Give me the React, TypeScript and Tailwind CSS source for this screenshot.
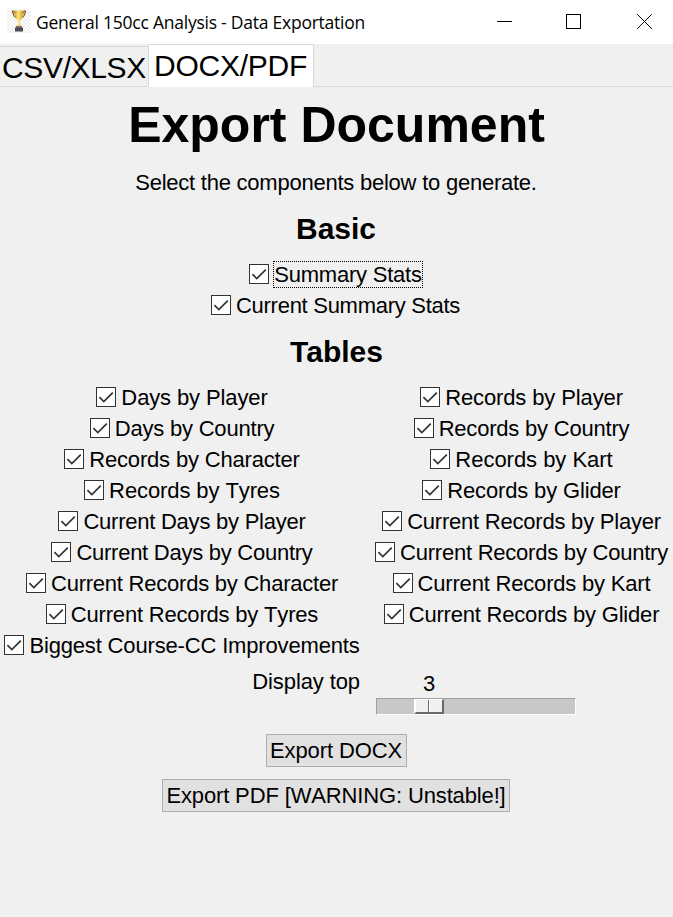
import React from "react";

type Item = { text: string; tracking?: number; focused?: boolean };

const basic: Item[] = [
  { text: "Summary Stats", tracking: -0.22, focused: true },
  { text: "Current Summary Stats", tracking: -0.28 },
];

const left: Item[] = [
  { text: "Days by Player", tracking: -0.12 },
  { text: "Days by Country", tracking: -0.2 },
  { text: "Records by Character", tracking: -0.17 },
  { text: "Records by Tyres", tracking: -0.1 },
  { text: "Current Days by Player", tracking: -0.24 },
  { text: "Current Days by Country", tracking: -0.26 },
  { text: "Current Records by Character", tracking: -0.23 },
  { text: "Current Records by Tyres", tracking: -0.19 },
  { text: "Biggest Course-CC Improvements", tracking: -0.16 },
];

const right: Item[] = [
  { text: "Records by Player", tracking: -0.12 },
  { text: "Records by Country", tracking: -0.21 },
  { text: "Records by Kart", tracking: -0.03 },
  { text: "Records by Glider", tracking: -0.15 },
  { text: "Current Records by Player", tracking: -0.22 },
  { text: "Current Records by Country", tracking: -0.23 },
  { text: "Current Records by Kart", tracking: -0.19 },
  { text: "Current Records by Glider", tracking: -0.2 },
];

function CheckItem({ text, tracking = 0, focused }: Item) {
  return (
    <label className="flex h-[31px] items-center justify-center gap-1">
      <span className="mb-px flex size-5 shrink-0 items-center justify-center border border-[#333] bg-white">
        <svg width="18" height="18" viewBox="0 0 18 18" fill="none" stroke="#333" strokeWidth="1.7">
          <path d="M2.4 9.2 L6.8 13.5 L15.8 4.7" />
        </svg>
      </span>
      <span
        className={`flex h-[27px] items-center border border-dotted whitespace-nowrap ${focused ? "border-black" : "border-transparent"}`}
        style={{ letterSpacing: tracking }}
      >
        {text}
      </span>
    </label>
  );
}

function Trophy() {
  return (
    <svg width="24" height="24" viewBox="0 0 24 24">
      <defs>
        <pattern id="checks" width="4" height="4" patternUnits="userSpaceOnUse">
          <rect width="4" height="4" fill="#fbfbfb" />
          <rect width="2" height="2" fill="#eeeeee" />
          <rect x="2" y="2" width="2" height="2" fill="#eeeeee" />
        </pattern>
        <linearGradient id="gold" x1="0" x2="1">
          <stop offset="0" stopColor="#d19a1e" />
          <stop offset="0.4" stopColor="#ffe680" />
          <stop offset="1" stopColor="#cf9a20" />
        </linearGradient>
      </defs>
      <rect width="24" height="24" fill="url(#checks)" />
      <path d="M8 4.500 C6.500 .5 4.500 2 6 4 C6.500 6.500 7.500 8 9 8.500 M16 4.500 C17.500 .5 19.500 2 18 4 C17.500 6.500 16.500 8 15 8.500" fill="none" stroke="#7a5a1c" strokeWidth="1.200" />
      <path d="M7.500 1.500 H16.500 C16.500 6.500 15.500 10 13 11.500 L12.600 14.500 L14.500 17 H9.500 L11.400 14.500 L11 11.500 C8.500 10 7.500 6.500 7.500 1.500Z" fill="url(#gold)" />
      <rect x="9" y="17" width="6" height="2" fill="#77777b" />
      <rect x="8" y="18.500" width="8" height="4" fill="#4c4c55" />
    </svg>
  );
}

export default function App() {
  return (
    <div className="flex h-[917px] w-[673px] flex-col overflow-hidden bg-[#f0f0f0] font-['Liberation_Sans',Arial,sans-serif] text-[22px] leading-[23px] text-black [font-kerning:none]">
      <header className="flex h-11 shrink-0 items-center bg-white pb-[2px] pl-[7px]">
        <Trophy />
        <h1 className="mt-[2px] ml-[5px] grow font-['Open_Sans',sans-serif] text-[17.5px] tracking-[-0.24px] whitespace-nowrap">
          General 150cc Analysis - Data Exportation
        </h1>
        <svg className="mt-[2px] shrink-0" width="176" height="44" viewBox="0 0 176 44" fill="none" stroke="#000">
          <path d="M0 21.500H15" />
          <rect x="69.500" y="14.500" width="14" height="14" />
          <path d="M140.200 14.200L154.800 28.800M154.800 14.200L140.200 28.800" />
        </svg>
      </header>

      <nav className="flex h-[43px] shrink-0 items-end text-[30px] leading-[31px] tracking-[-0.25px] whitespace-nowrap">
        <div className="h-[41px] w-[148px] border-y border-[#d9d9d9] pt-[5px] pl-0.5 tracking-[-0.35px]">CSV/XLSX</div>
        <div className="h-[43px] w-[166px] border-x border-t border-[#d9d9d9] bg-white pt-[5px] pl-[5px]">DOCX/PDF</div>
        <div className="grow border-b border-[#d9d9d9]" />
      </nav>

      <main className="flex flex-col">
        <h2 className="mt-[13px] h-[50px] text-center text-[50px] leading-[50px] font-bold">Export Document</h2>
        <p className="mt-[21px] h-[23px] pr-px text-center tracking-[-0.235px]">Select the components below to generate.</p>
        <h3 className="mt-[19px] h-[31px] pr-px text-center text-[30px] leading-[31px] font-bold">Basic</h3>
        <section className="mt-[15px] flex flex-col pr-px">
          {basic.map((item) => <CheckItem key={item.text} {...item} />)}
        </section>
        <h3 className="mt-[15px] h-[31px] text-center text-[30px] leading-[31px] font-bold [font-kerning:normal]">Tables</h3>
        <section className="mt-[15px] flex">
          <div className="w-[365px] shrink-0">
            {left.map((item) => <CheckItem key={item.text} {...item} />)}
          </div>
          <div className="w-[314px] shrink-0">
            {right.map((item) => <CheckItem key={item.text} {...item} />)}
          </div>
        </section>

        <section className="flex h-[54px]">
          <div className="w-[360px] pt-[9px] text-right tracking-[-0.1px]">Display top</div>
          <div className="ml-4 w-[200px]">
            <div className="flex h-[37px] w-[106px] items-start justify-center pt-[11px]">3</div>
            <div className="flex h-[17px] w-[200px] border border-t-[#a0a0a0] border-r-white border-b-white border-l-[#a0a0a0] bg-[#c8c8c8] pl-[37px]">
              <div className="flex h-[15px] w-[30px] border-t border-r-2 border-b-2 border-l-2 border-t-white border-r-[#696969] border-b-[#696969] border-l-white bg-[#f0f0f0]">
                <div className="h-full w-[13px] border-r border-[#696969]" />
                <div className="h-full w-px bg-white" />
              </div>
            </div>
          </div>
        </section>

        <section className="mt-[19px] flex flex-col items-center gap-3 pr-px">
          <button className="h-[33px] w-[141px] border border-[#adadad] bg-[#e1e1e1] tracking-[-0.1px] whitespace-nowrap">Export DOCX</button>
          <button className="h-[33px] w-[348px] border border-[#adadad] bg-[#e1e1e1] tracking-[-0.14px] whitespace-nowrap">Export PDF [WARNING: Unstable!]</button>
        </section>
      </main>
    </div>
  );
}
